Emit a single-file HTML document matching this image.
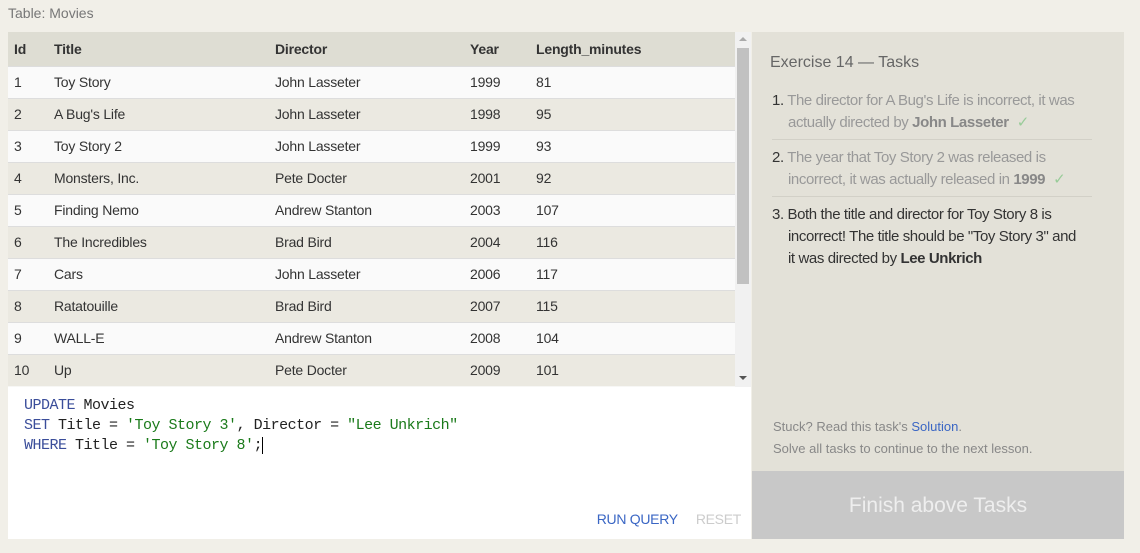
<!DOCTYPE html>
<html><head><style>
*{margin:0;padding:0;box-sizing:border-box}
body{width:1140px;height:553px;background:#f1efe8;font-family:"Liberation Sans",sans-serif;position:relative;overflow:hidden;color:#333}
.cap{position:absolute;left:8px;top:5px;font-size:14px;color:#777}
.tbl{position:absolute;left:8px;top:32px;width:743px;height:355px;background:#f7f7f5;overflow:hidden}
table{border-collapse:collapse;width:727px;font-size:14px;letter-spacing:-0.2px}
th{background:#deddd3;height:34px;text-align:left;font-weight:bold;color:#333}
td{height:32px;border-top:1px solid #ddd;color:#333}
tr:nth-child(odd) td{background:#ebe9e1}
tr:nth-child(even) td{background:#fafafa}
th:nth-child(1),td:nth-child(1){padding-left:6px;width:46px}
th:nth-child(2),td:nth-child(2){width:221px}
th:nth-child(3),td:nth-child(3){width:195px}
th:nth-child(4),td:nth-child(4){width:66px}
.sb{position:absolute;left:727px;top:0;width:16px;height:355px;background:#f1f1f1}
.thumb{position:absolute;left:2px;top:16px;width:12px;height:236px;background:#c1c1c1}
.ed{position:absolute;left:8px;top:387px;width:743px;height:152px;background:#fff;font-family:"Liberation Mono",monospace;font-size:15px;line-height:20px;padding:9px 16px;color:#222;letter-spacing:-0.5px}
.k{color:#3a4d9a}.s{color:#1a7a1a}
.btns{position:absolute;right:10px;bottom:10px;font-size:14px;font-family:"Liberation Sans",sans-serif;letter-spacing:-0.3px}
.rp{position:absolute;left:752px;top:32px;width:372px;height:507px;background:#e3e1d8}
.rp h3{position:absolute;left:18px;top:22px;font-weight:normal;font-size:16px;color:#666}
.rp ol{position:absolute;left:20px;top:56px;width:340px;list-style:none;font-size:15px;line-height:22px;letter-spacing:-0.4px}
.rp li{padding:2px 0 5px 16px;text-indent:-16px;border-bottom:1px solid #d2d0c7;margin-bottom:5px;width:320px}
.rp li.d{color:#999}.rp li.d b{color:#888}
.rp li:last-child{border:none;color:#333;width:310px}
.ck{color:#9c9;margin-left:8px}
.st{position:absolute;left:21px;top:384px;font-size:13px;color:#888;line-height:22px}
.fb{position:absolute;left:0;top:439px;width:372px;height:68px;background:#c8c8c8;color:#eee;font-size:21px;text-align:center;line-height:70px}
</style></head><body>
<div class="cap">Table: Movies</div>
<div class="tbl"><table>
<tr><th>Id</th><th>Title</th><th>Director</th><th>Year</th><th>Length_minutes</th></tr>
<tr><td>1</td><td>Toy Story</td><td>John Lasseter</td><td>1999</td><td>81</td></tr>
<tr><td>2</td><td>A Bug's Life</td><td>John Lasseter</td><td>1998</td><td>95</td></tr>
<tr><td>3</td><td>Toy Story 2</td><td>John Lasseter</td><td>1999</td><td>93</td></tr>
<tr><td>4</td><td>Monsters, Inc.</td><td>Pete Docter</td><td>2001</td><td>92</td></tr>
<tr><td>5</td><td>Finding Nemo</td><td>Andrew Stanton</td><td>2003</td><td>107</td></tr>
<tr><td>6</td><td>The Incredibles</td><td>Brad Bird</td><td>2004</td><td>116</td></tr>
<tr><td>7</td><td>Cars</td><td>John Lasseter</td><td>2006</td><td>117</td></tr>
<tr><td>8</td><td>Ratatouille</td><td>Brad Bird</td><td>2007</td><td>115</td></tr>
<tr><td>9</td><td>WALL-E</td><td>Andrew Stanton</td><td>2008</td><td>104</td></tr>
<tr><td>10</td><td>Up</td><td>Pete Docter</td><td>2009</td><td>101</td></tr>
</table>
<div class="sb"><div style="position:absolute;left:4px;top:5px;border:4px solid transparent;border-bottom-color:#aaa;border-top:0"></div><div class="thumb"></div><div style="position:absolute;left:4px;top:344px;border:4px solid transparent;border-top-color:#555;border-bottom:0"></div></div>
</div>
<div class="ed"><span class="k">UPDATE</span> Movies<br><span class="k">SET</span> Title = <span class="s">'Toy Story 3'</span>, Director = <span class="s">"Lee Unkrich"</span><br><span class="k">WHERE</span> Title = <span class="s">'Toy Story 8'</span>;<span style="border-left:1px solid #000"></span>
<div class="btns"><span style="color:#3a66c4">RUN QUERY</span><span style="color:#ccc;margin-left:18px">RESET</span></div></div>
<div class="rp"><h3>Exercise 14 — Tasks</h3>
<ol>
<li class="d"><span style="color:#333">1.</span> The director for A Bug's Life is incorrect, it was actually directed by <b>John Lasseter</b><span class="ck">✓</span></li>
<li class="d"><span style="color:#333">2.</span> The year that Toy Story 2 was released is incorrect, it was actually released in <b>1999</b><span class="ck">✓</span></li>
<li>3. Both the title and director for Toy Story 8 is incorrect! The title should be "Toy Story 3" and it was directed by <b>Lee Unkrich</b></li>
</ol>
<div class="st">Stuck? Read this task's <span style="color:#3a66c4">Solution</span>.<br>Solve all tasks to continue to the next lesson.</div>
<div class="fb">Finish above Tasks</div>
</div>
</body></html>
